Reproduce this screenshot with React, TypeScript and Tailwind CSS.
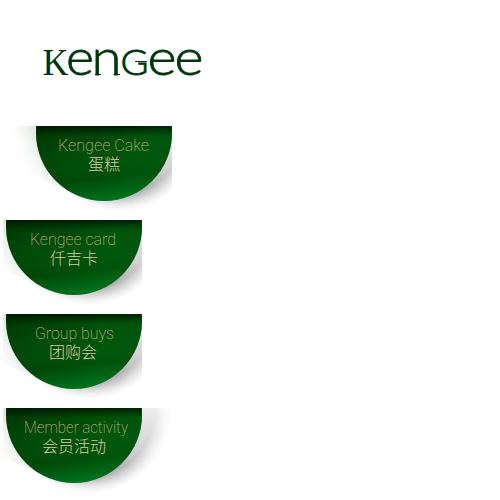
type Item = {
  title: string;
  label: string;
  width: number;
  titleWidth: number;
  labelX: number;
  titleX: number;
  tile: string;
  shade: number;
};

const items: Item[] = [
  { title: 'Kengee Cake', label: '蛋糕', titleX: 55, titleWidth: 91, labelX: 85, width: 169, tile: 'w-[169px]', shade: 30 },
  { title: 'Kengee card', label: '仟吉卡', titleX: 27, titleWidth: 86, labelX: 47, width: 139, tile: 'w-[139px]', shade: 0 },
  { title: 'Group buys', label: '团购会', titleX: 32, titleWidth: 79, labelX: 46, width: 139, tile: 'w-[139px]', shade: 0 },
  { title: 'Member activity', label: '会员活动', titleX: 21, titleWidth: 104, labelX: 39, width: 169, tile: 'w-[169px]', shade: 0 },
];

function Logo() {
  return (
    <svg className="ml-[40px] block h-[40px] w-[165px] overflow-visible" viewBox="0 0 165 40" fill="#00360a" stroke="#00360a" aria-label="Kengee">
      <g fontFamily="Lato, sans-serif" fontWeight="300" strokeWidth="0.8">
        <text x="2.5" y="34.5" fontFamily="'Liberation Serif', serif" fontWeight="400" fontSize="38.5" strokeWidth="0" textLength="26" lengthAdjust="spacingAndGlyphs">K</text>
        <text x="26" y="34.5" fontSize="50" textLength="28" lengthAdjust="spacingAndGlyphs">e</text>
        <text x="51.5" y="34.5" fontSize="50" textLength="30" lengthAdjust="spacingAndGlyphs">n</text>
        <text x="80.5" y="34.5" fontSize="35.5" textLength="28" lengthAdjust="spacingAndGlyphs">G</text>
        <text x="107.5" y="34.5" fontSize="50" textLength="29" lengthAdjust="spacingAndGlyphs">e</text>
        <text x="134.5" y="34.5" fontSize="50" textLength="29" lengthAdjust="spacingAndGlyphs">e</text>
      </g>
      <path d="M55 34.5H61M73.5 34.5H80M95 21.5H107" strokeWidth="1" />
    </svg>
  );
}

function Tile({ item, index }: { item: Item; index: number }) {
  const id = `tile-${index}`;
  return (
    <a className={`block h-[84px] ${item.tile}`}>
      <svg className="block h-full w-full overflow-hidden" viewBox={`0 0 ${item.width} 84`}>
        <defs>
          <linearGradient id={`${id}-green`} x1="0.42" y1="0" x2="0.54" y2="1">
            <stop offset="0.45" stopColor="#004005" />
            <stop offset="0.62" stopColor="#00500a" />
            <stop offset="0.74" stopColor="#00520a" />
            <stop offset="0.83" stopColor="#004c08" />
            <stop offset="0.92" stopColor="#006216" />
            <stop offset="1" stopColor="#007a22" />
          </linearGradient>
          <linearGradient id={`${id}-edge`} x1="0" x2="1" y1="0" y2="0">
            <stop offset="0" stopColor="#001b00" stopOpacity="0.25" />
            <stop offset="0.35" stopColor="#003500" stopOpacity="0.08" />
            <stop offset="0.7" stopColor="#006b12" stopOpacity="0.2" />
            <stop offset="1" stopColor="#005c12" stopOpacity="0.4" />
          </linearGradient>
          <linearGradient id={`${id}-top`} x1="0" x2="0.06" y1="0" y2="1">
            <stop offset="0" stopColor="#000f00" stopOpacity="0.75" />
            <stop offset="1" stopColor="#000f00" stopOpacity="0" />
          </linearGradient>
          <linearGradient id={`${id}-haze`} gradientUnits="userSpaceOnUse" x1="8" x2="-26" y1="0" y2="10">
            <stop offset="0" stopColor="#cfdfd2" />
            <stop offset="0.3" stopColor="#e4eee6" />
            <stop offset="1" stopColor="#ffffff" stopOpacity="0" />
          </linearGradient>
          <linearGradient id={`${id}-haze-fade`} gradientUnits="userSpaceOnUse" x1="0" x2="-12" y1="0" y2="62">
            <stop offset="0" stopColor="#fff" />
            <stop offset="0.5" stopColor="#aaa" />
            <stop offset="1" stopColor="#333" />
          </linearGradient>
          <mask id={`${id}-haze-mask`} maskUnits="userSpaceOnUse" x="-30" y="0" width="70" height="84">
            <rect x="-30" width="70" height="84" fill={`url(#${id}-haze-fade)`} />
          </mask>
          <radialGradient id={`${id}-shadow`} gradientUnits="userSpaceOnUse" cx="86" cy="1" r="84">
            <stop offset="0.79" stopColor="#555" stopOpacity="0.6" />
            <stop offset="0.86" stopColor="#666" stopOpacity="0.36" />
            <stop offset="0.93" stopColor="#888" stopOpacity="0.16" />
            <stop offset="1" stopColor="#999" stopOpacity="0" />
          </radialGradient>
          <linearGradient id={`${id}-shadow-fade`} gradientUnits="userSpaceOnUse" x1="0" x2="0" y1="0" y2="84">
            <stop offset="0" stopColor="#2c2c2c" />
            <stop offset="0.5" stopColor="#707070" />
            <stop offset="0.85" stopColor="#f0f0f0" />
            <stop offset="1" stopColor="#fff" />
          </linearGradient>
          <mask id={`${id}-shadow-mask`} maskUnits="userSpaceOnUse" x="0" y="0" width="172" height="84">
            <rect width="172" height="84" fill={`url(#${id}-shadow-fade)`} />
          </mask>
          <clipPath id={`${id}-disc`}>
            <circle cx="71" cy="7" r="68" />
          </clipPath>
        </defs>
        <g transform={`translate(${item.shade} 0)`}>
          <path d="M-26 0H35V66L-2 48L-26 39Z" fill={`url(#${id}-haze)`} mask={`url(#${id}-haze-mask)`} />
          <circle cx="86" cy="1" r="84" fill={`url(#${id}-shadow)`} mask={`url(#${id}-shadow-mask)`} />
          <circle cx="71" cy="7" r="68" fill={`url(#${id}-green)`} />
          <g clipPath={`url(#${id}-disc)`}>
            <rect width="139" height="76" fill={`url(#${id}-edge)`} />
            <rect width="139" height="10" fill={`url(#${id}-top)`} />
          </g>
        </g>
        <text x={item.titleX} y="25" fontFamily="Roboto, 'Liberation Sans', sans-serif" fontWeight="200" fontSize="17" fill="#bba96a" textLength={item.titleWidth} lengthAdjust="spacingAndGlyphs">
          {item.title}
        </text>
        <text x={item.labelX} y="43.5" fontFamily="'Noto Sans CJK SC', sans-serif" fontWeight="300" fontSize="16" fill="#dccb9c">
          {item.label}
        </text>
      </svg>
    </a>
  );
}

export default function App() {
  return (
    <main className="flex h-[500px] w-[500px] flex-col overflow-hidden bg-white pt-[40px]">
      <Logo />
      <nav className="ml-[3px] mt-[46px] flex flex-col items-start gap-[10px]">
        {items.map((item, index) => (
          <Tile key={item.title} item={item} index={index} />
        ))}
      </nav>
    </main>
  );
}
